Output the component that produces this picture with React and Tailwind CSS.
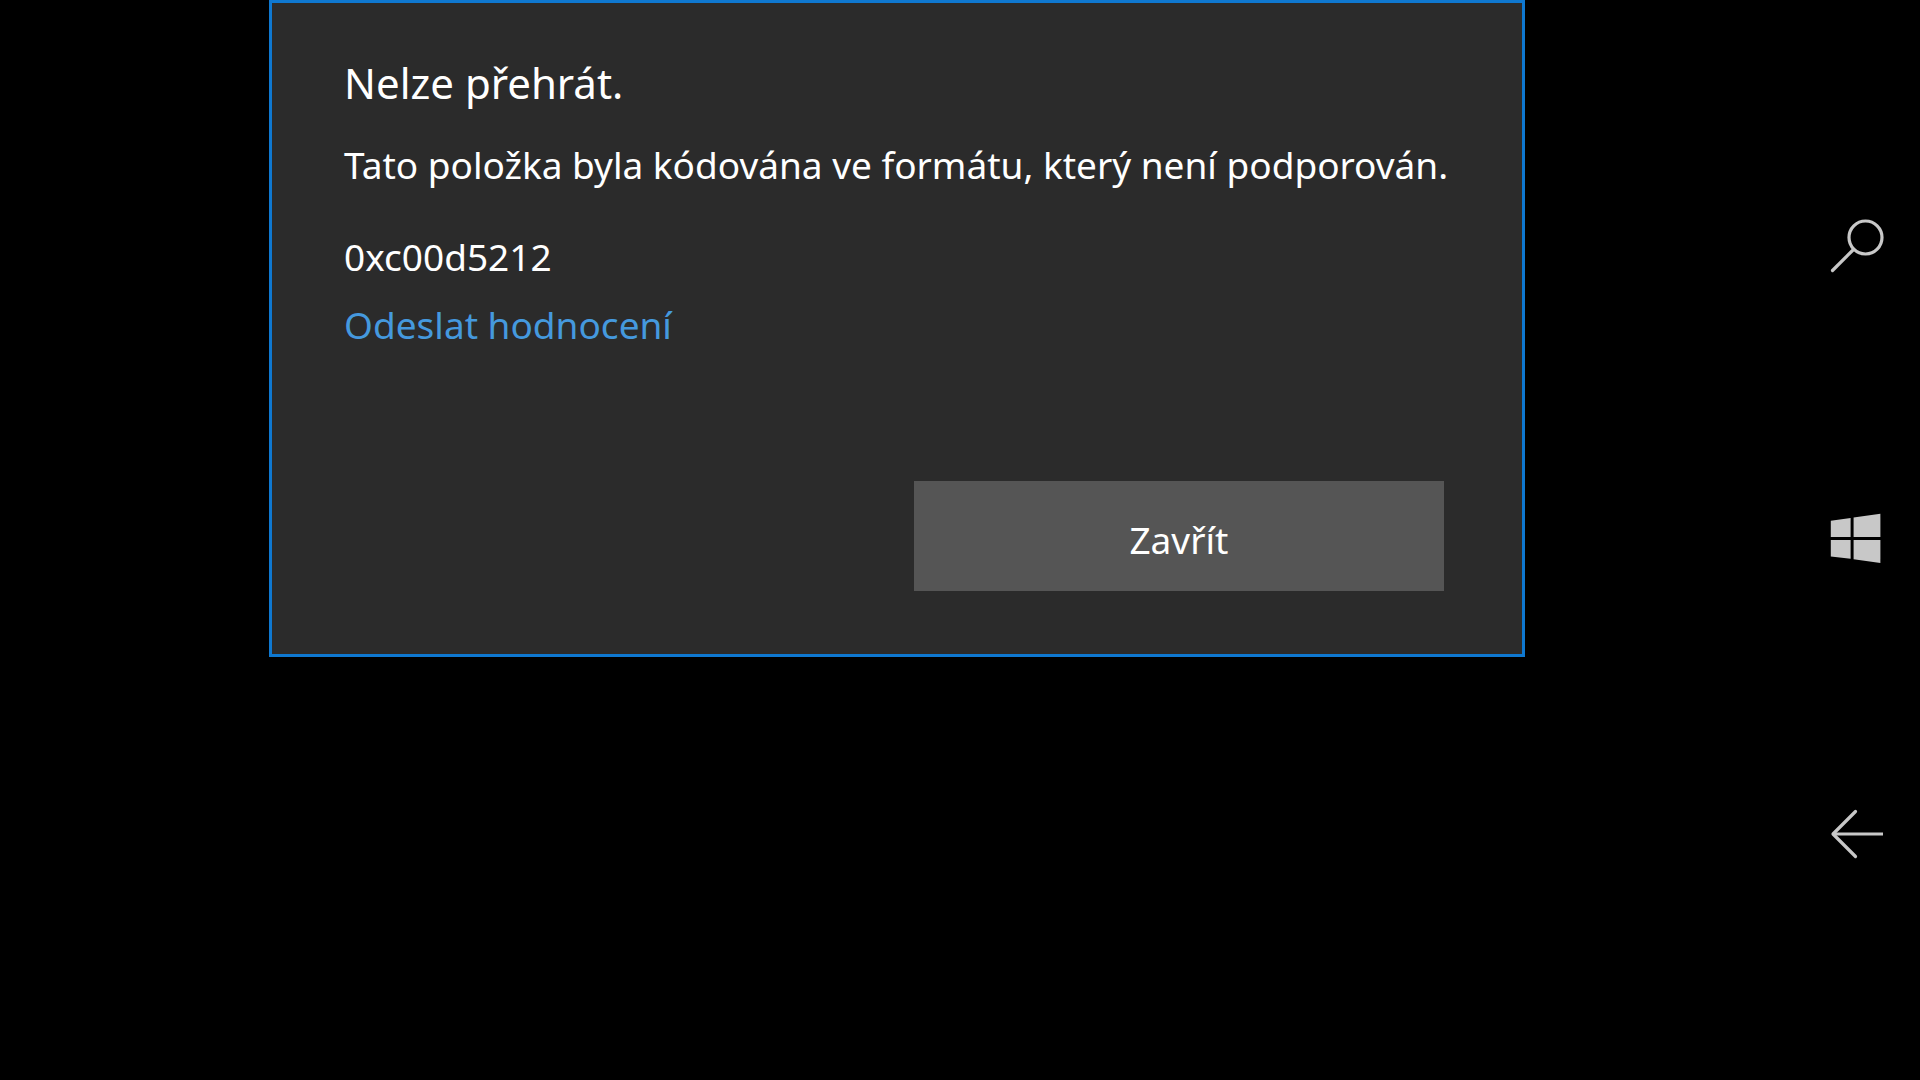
import React, { useState } from "react";

function SearchIcon() {
  return (
    <svg width="60" height="60" viewBox="0 0 60 60" fill="none" stroke="#c8c8c8" strokeWidth="3.2" strokeLinecap="round">
      <circle cx="38.5" cy="21.5" r="16.5" />
      <path d="M26.5 33.5 5.5 54.5" />
    </svg>
  );
}

function StartIcon() {
  return (
    <svg width="60" height="60" viewBox="0 0 60 60" fill="#c8c8c8">
      <path d="M3.8 10.8 23.6 8v19H3.8z" />
      <path d="M26.6 7.4 53.4 3.8V27H26.6z" />
      <path d="M3.8 30h19.8v18.8L3.8 46.4z" />
      <path d="M26.6 30h26.8v23l-26.8-3.8z" />
    </svg>
  );
}

function BackIcon() {
  return (
    <svg width="60" height="60" viewBox="0 0 60 60" fill="none" stroke="#c8c8c8" strokeWidth="3.2">
      <path d="M6 30H56" />
      <path d="M28.5 7.5 6 30l22.5 22.5" strokeLinecap="round" strokeLinejoin="round" />
    </svg>
  );
}

const navButtons = [
  { label: "Hledat", Icon: SearchIcon },
  { label: "Start", Icon: StartIcon },
  { label: "Zpět", Icon: BackIcon },
];

export default function App() {
  const [open, setOpen] = useState(true);

  return (
    <div className="flex min-h-screen bg-black font-['Noto_Sans',sans-serif] text-white">
      <main className="flex flex-1 items-start justify-center">
        {open && (
          <div
            role="dialog"
            aria-labelledby="dialog-title"
            className="w-[70%] border-3 border-[#0f78d0] bg-[#2b2b2b] px-[72px] pt-[50px] pb-[63px]"
          >
            <h1 id="dialog-title" className="text-[42px] leading-[60px]">
              Nelze přehrát.
            </h1>
            <div className="mt-[22px] text-[37px] leading-[60px]">
              <p className="whitespace-nowrap">
                Tato položka byla kódována ve formátu, který není podporován.
              </p>
              <p className="mt-8">0xc00d5212</p>
              <a href="#feedback" className="mt-2 block w-fit text-[#4599de]">
                Odeslat hodnocení
              </a>
            </div>
            <div className="mt-[126px] flex justify-end pr-1.5">
              <button
                type="button"
                onClick={() => setOpen(false)}
                className="h-[110px] w-[530px] bg-[#555555] pt-2 text-[37px]"
              >
                Zavřít
              </button>
            </div>
          </div>
        )}
      </main>

      <nav className="flex w-[126px] flex-col py-[99px]">
        {navButtons.map(({ label, Icon }) => (
          <button key={label} type="button" aria-label={label} className="flex flex-1 items-center justify-center">
            <Icon />
          </button>
        ))}
      </nav>
    </div>
  );
}
